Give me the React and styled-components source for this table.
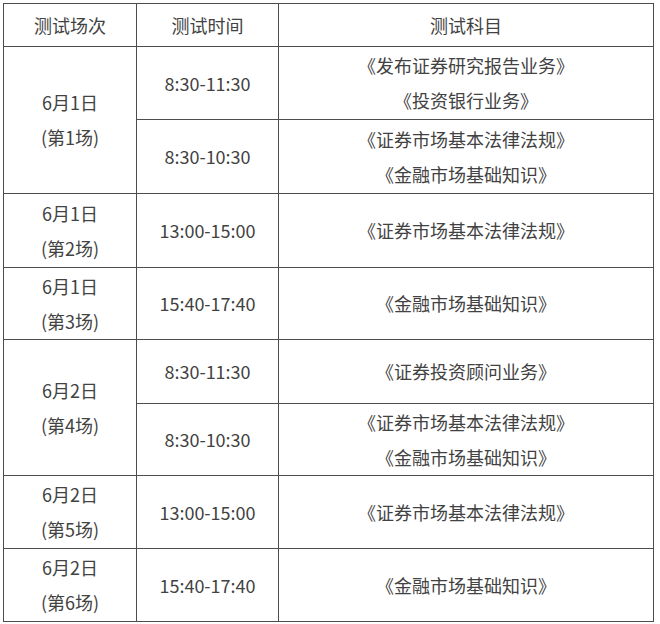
import styled, { createGlobalStyle } from "styled-components";

const GlobalStyle = createGlobalStyle`
  body {
    margin: 0;
    background: #fff;
    font-family: "Noto Sans CJK SC", "Noto Sans", sans-serif;
  }
`;

const Page = styled.div`
  padding: 3px 0 0 3px;
`;

const Grid = styled.div`
  display: grid;
  width: 651px;
  grid-template-columns: 132px 141px 374px;
  grid-template-rows: 42px 72px 73px 73px 71px 63px 71px 72px 72px;
  gap: 1px;
  padding: 1px;
  box-sizing: border-box;
  background: #4d4d4d;
`;

const Cell = styled.div`
  background: #fff;
  display: flex;
  flex-direction: column;
  align-items: center;
  justify-content: center;
  color: #424242;
  font-size: 18px;
  line-height: 35px;
  grid-row: ${(p) => (p.$span ? `span ${p.$span}` : "auto")};
  text-align: center;
`;

// 每个场次: 日期, 场次号, 时间段 + 科目
const sessions = [
  {
    date: "6月1日",
    no: 1,
    slots: [
      { time: "8:30-11:30", subjects: ["《发布证券研究报告业务》", "《投资银行业务》"] },
      { time: "8:30-10:30", subjects: ["《证券市场基本法律法规》", "《金融市场基础知识》"] },
    ],
  },
  {
    date: "6月1日",
    no: 2,
    slots: [{ time: "13:00-15:00", subjects: ["《证券市场基本法律法规》"] }],
  },
  {
    date: "6月1日",
    no: 3,
    slots: [{ time: "15:40-17:40", subjects: ["《金融市场基础知识》"] }],
  },
  {
    date: "6月2日",
    no: 4,
    slots: [
      { time: "8:30-11:30", subjects: ["《证券投资顾问业务》"] },
      { time: "8:30-10:30", subjects: ["《证券市场基本法律法规》", "《金融市场基础知识》"] },
    ],
  },
  {
    date: "6月2日",
    no: 5,
    slots: [{ time: "13:00-15:00", subjects: ["《证券市场基本法律法规》"] }],
  },
  {
    date: "6月2日",
    no: 6,
    slots: [{ time: "15:40-17:40", subjects: ["《金融市场基础知识》"] }],
  },
];

const App = () => {
  return (
    <Page>
      <GlobalStyle />
      <Grid>
        <Cell>测试场次</Cell>
        <Cell>测试时间</Cell>
        <Cell>测试科目</Cell>
        {sessions.map((s) =>
          s.slots.map((slot, i) => [
            i === 0 ? (
              <Cell key={`d${s.no}`} $span={s.slots.length}>
                <div>{s.date}</div>
                <div>(第{s.no}场)</div>
              </Cell>
            ) : null,
            <Cell key={`t${s.no}-${i}`}>{slot.time}</Cell>,
            <Cell key={`s${s.no}-${i}`}>
              {slot.subjects.map((sub) => (
                <div key={sub}>{sub}</div>
              ))}
            </Cell>,
          ])
        )}
      </Grid>
    </Page>
  );
};

export default App;
